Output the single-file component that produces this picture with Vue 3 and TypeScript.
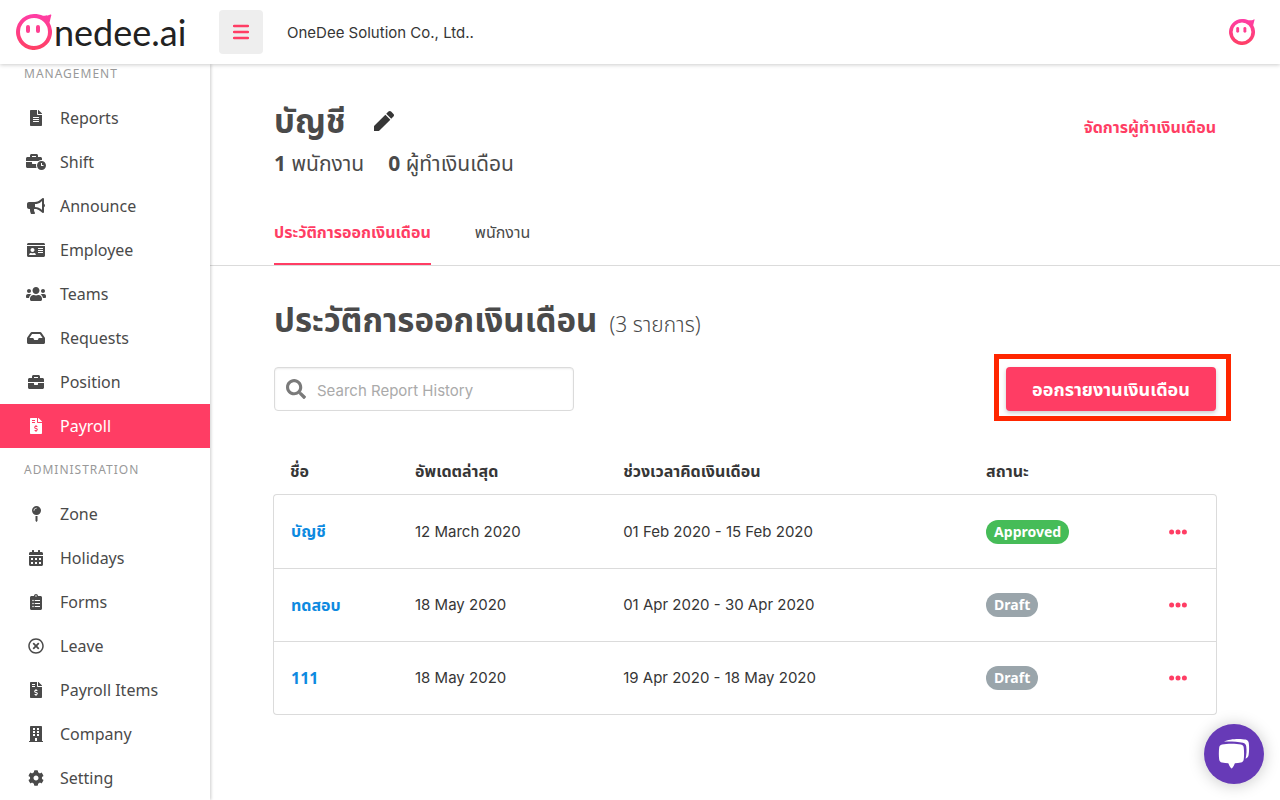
<script setup lang="ts">
import { ref } from 'vue'

interface NavItem { label: string; w: number; vw: number; d: string }
interface NavGroup { title: string; items: NavItem[] }
interface Report { name: string; updated: string; period: string; status: 'Approved' | 'Draft' }

const invoice =
  'M377 105L279.1 7c-4.5-4.5-10.6-7-17-7H256v128h128v-6.1c0-6.3-2.5-12.4-7-16.9zm-153 31V0H24C10.7 0 0 10.7 0 24v464c0 13.3 10.7 24 24 24h336c13.3 0 24-10.7 24-24V160H248c-13.2 0-24-10.8-24-24zM64 72c0-4.42 3.58-8 8-8h80c4.42 0 8 3.58 8 8v16c0 4.42-3.58 8-8 8H72c-4.42 0-8-3.58-8-8V72zm0 80v-16c0-4.42 3.58-8 8-8h80c4.42 0 8 3.58 8 8v16c0 4.42-3.58 8-8 8H72c-4.42 0-8-3.58-8-8zm144 263.88V440c0 4.42-3.58 8-8 8h-16c-4.42 0-8-3.58-8-8v-24.29c-11.29-.58-22.27-4.52-31.37-11.35-3.9-2.93-4.1-8.77-.57-12.14l11.75-11.21c2.77-2.64 6.89-2.76 10.13-.73 3.87 2.42 8.26 3.72 12.82 3.72h28.11c6.5 0 11.8-5.92 11.8-13.19 0-5.95-3.61-11.19-8.77-12.73l-45-13.5c-18.59-5.58-31.58-23.42-31.58-43.39 0-24.52 19.05-44.44 42.67-45.07V232c0-4.42 3.58-8 8-8h16c4.42 0 8 3.58 8 8v24.29c11.29.58 22.27 4.51 31.37 11.35 3.9 2.93 4.1 8.77.57 12.14l-11.75 11.21c-2.77 2.64-6.89 2.76-10.13.73-3.87-2.43-8.26-3.72-12.82-3.72h-28.11c-6.5 0-11.8 5.92-11.8 13.19 0 5.95 3.61 11.19 8.77 12.73l45 13.5c18.59 5.58 31.58 23.42 31.58 43.39 0 24.53-19.05 44.44-42.67 45.07z'

const groups: NavGroup[] = [
  {
    title: 'MANAGEMENT',
    items: [
      { label: 'Reports', w: 12, vw: 384, d: 'M224 136V0H24C10.7 0 0 10.7 0 24v464c0 13.3 10.7 24 24 24h336c13.3 0 24-10.7 24-24V160H248c-13.2 0-24-10.8-24-24zm64 236c0 6.6-5.4 12-12 12H108c-6.6 0-12-5.4-12-12v-8c0-6.6 5.4-12 12-12h168c6.6 0 12 5.4 12 12v8zm0-64c0 6.6-5.4 12-12 12H108c-6.6 0-12-5.4-12-12v-8c0-6.6 5.4-12 12-12h168c6.6 0 12 5.4 12 12v8zm0-72v8c0 6.6-5.4 12-12 12H108c-6.6 0-12-5.4-12-12v-8c0-6.6 5.4-12 12-12h168c6.6 0 12 5.4 12 12zm96-114.1v6.1H256V0h6.1c6.4 0 12.5 2.5 17 7l97.9 98c4.5 4.5 7 10.6 7 16.9z' },
      { label: 'Shift', w: 20, vw: 640, d: 'M496 224c-79.59 0-144 64.41-144 144s64.41 144 144 144 144-64.41 144-144-64.41-144-144-144zm64 150.29c0 5.34-4.37 9.71-9.71 9.71h-60.57c-5.34 0-9.71-4.37-9.71-9.71v-76.57c0-5.34 4.37-9.71 9.71-9.71h12.57c5.34 0 9.71 4.37 9.71 9.71V352h38.29c5.34 0 9.71 4.37 9.71 9.71v12.58zM496 192c5.4 0 10.72.33 16 .81V144c0-25.6-22.4-48-48-48h-80V48c0-25.6-22.4-48-48-48H176c-25.6 0-48 22.4-48 48v48H48c-25.6 0-48 22.4-48 48v80h395.12c28.6-20.09 63.35-32 100.88-32zM320 96H192V64h128v32zm6.82 224H208c-8.84 0-16-7.16-16-16v-48H0v144c0 25.6 22.4 48 48 48h291.43C327.1 423.96 320 396.82 320 368c0-16.66 2.48-32.72 6.82-48z' },
      { label: 'Announce', w: 18, vw: 576, d: 'M576 240c0-23.63-12.95-44.04-32-55.12V32.01C544 23.26 537.02 0 512 0c-7.12 0-14.19 2.38-19.98 7.02l-85.03 68.03C364.28 109.19 310.66 128 256 128H64c-35.35 0-64 28.65-64 64v96c0 35.35 28.65 64 64 64h33.7c-1.39 10.48-2.18 21.14-2.18 32 0 39.77 9.26 77.35 25.56 110.94 5.19 10.69 16.52 17.06 28.4 17.06h74.28c26.05 0 41.69-29.84 25.9-50.56-16.4-21.52-26.15-48.36-26.15-77.44 0-11.11 1.62-21.79 4.41-32H256c54.66 0 108.28 18.81 150.98 52.95l85.03 68.03a32.023 32.023 0 0 0 19.98 7.02c24.92 0 32-22.78 32-32V295.13C563.05 284.04 576 263.63 576 240zm-96 141.42l-33.05-26.44C392.95 311.78 325.12 288 256 288v-96c69.12 0 136.95-23.78 190.95-66.98L480 98.58v282.84z' },
      { label: 'Employee', w: 18, vw: 576, d: 'M528 32H48C21.5 32 0 53.5 0 80v16h576V80c0-26.5-21.5-48-48-48zM0 432c0 26.5 21.5 48 48 48h480c26.5 0 48-21.5 48-48V128H0v304zm352-232c0-4.4 3.6-8 8-8h144c4.4 0 8 3.6 8 8v16c0 4.4-3.6 8-8 8H360c-4.4 0-8-3.6-8-8v-16zm0 64c0-4.4 3.6-8 8-8h144c4.4 0 8 3.6 8 8v16c0 4.4-3.6 8-8 8H360c-4.4 0-8-3.6-8-8v-16zm0 64c0-4.4 3.6-8 8-8h144c4.4 0 8 3.6 8 8v16c0 4.4-3.6 8-8 8H360c-4.4 0-8-3.6-8-8v-16zM176 192c35.3 0 64 28.7 64 64s-28.7 64-64 64-64-28.7-64-64 28.7-64 64-64zM67.1 396.2C75.5 370.5 99.6 352 128 352h8.2c12.3 5.1 25.7 8 39.8 8s27.6-2.9 39.8-8h8.2c28.4 0 52.5 18.5 60.9 44.2 3.2 9.9-5.2 19.8-15.6 19.8H82.7c-10.4 0-18.8-10-15.6-19.8z' },
      { label: 'Teams', w: 20, vw: 640, d: 'M96 224c35.3 0 64-28.7 64-64s-28.7-64-64-64-64 28.7-64 64 28.7 64 64 64zm448 0c35.3 0 64-28.7 64-64s-28.7-64-64-64-64 28.7-64 64 28.7 64 64 64zm32 32h-64c-17.6 0-33.5 7.1-45.1 18.6 40.3 22.1 68.9 62 75.1 109.4h66c17.7 0 32-14.3 32-32v-32c0-35.3-28.7-64-64-64zm-256 0c61.9 0 112-50.1 112-112S381.9 32 320 32 208 82.1 208 144s50.1 112 112 112zm76.8 32h-8.3c-20.8 10-43.9 16-68.5 16s-47.6-6-68.5-16h-8.3C179.6 288 128 339.6 128 403.2V432c0 26.5 21.5 48 48 48h288c26.5 0 48-21.5 48-48v-28.8c0-63.6-51.6-115.2-115.2-115.2zm-223.7-13.4C161.5 263.1 145.6 256 128 256H64c-35.3 0-64 28.7-64 64v32c0 17.7 14.3 32 32 32h65.9c6.3-47.4 34.9-87.3 75.2-109.4z' },
      { label: 'Requests', w: 18, vw: 576, d: 'M567.938 243.908L462.25 85.374A48.003 48.003 0 0 0 422.311 64H153.689a48 48 0 0 0-39.938 21.374L8.062 243.908A47.994 47.994 0 0 0 0 270.533V400c0 26.51 21.49 48 48 48h480c26.51 0 48-21.49 48-48V270.533a47.994 47.994 0 0 0-8.062-26.625zM162.252 128h251.497l85.333 128H376l-32 64H232l-32-64H76.918l85.334-128z' },
      { label: 'Position', w: 16, vw: 512, d: 'M320 336c0 8.84-7.16 16-16 16h-96c-8.84 0-16-7.16-16-16v-48H0v144c0 25.6 22.4 48 48 48h416c25.6 0 48-22.4 48-48V288H320v48zm144-208h-80V80c0-25.6-22.4-48-48-48H176c-25.6 0-48 22.4-48 48v48H48c-25.6 0-48 22.4-48 48v80h512v-80c0-25.6-22.4-48-48-48zm-144 0H192V96h128v32z' },
      { label: 'Payroll', w: 12, vw: 384, d: invoice },
    ],
  },
  {
    title: 'ADMINISTRATION',
    items: [
      { label: 'Zone', w: 9, vw: 288, d: 'M112 316.94v156.69l22.02 33.02c4.75 7.12 15.22 7.12 19.97 0L176 473.63V316.94c-10.39 1.92-21.06 3.06-32 3.06s-21.61-1.14-32-3.06zM144 0C64.47 0 0 64.47 0 144s64.47 144 144 144 144-64.47 144-144S223.53 0 144 0zm0 76c-37.5 0-68 30.5-68 68 0 6.62-5.38 12-12 12s-12-5.38-12-12c0-50.73 41.28-92 92-92 6.62 0 12 5.38 12 12s-5.38 12-12 12z' },
      { label: 'Holidays', w: 14, vw: 448, d: 'M0 464c0 26.5 21.5 48 48 48h352c26.5 0 48-21.5 48-48V192H0v272zM320 256h64v64h-64zM320 384h64v64h-64zM192 256h64v64h-64zM192 384h64v64h-64zM64 256h64v64H64zM64 384h64v64H64zM400 64h-48V16c0-8.8-7.2-16-16-16h-32c-8.8 0-16 7.2-16 16v48H160V16c0-8.8-7.2-16-16-16h-32c-8.8 0-16 7.2-16 16v48H48C21.5 64 0 85.5 0 112v48h448v-48c0-26.5-21.5-48-48-48z' },
      { label: 'Forms', w: 12, vw: 384, d: 'M336 64h-80c0-35.3-28.7-64-64-64s-64 28.7-64 64H48C21.5 64 0 85.5 0 112v352c0 26.5 21.5 48 48 48h288c26.5 0 48-21.5 48-48V112c0-26.5-21.5-48-48-48zM192 40c13.3 0 24 10.7 24 24s-10.7 24-24 24-24-10.7-24-24 10.7-24 24-24zM96 184a24 24 0 1 0 .1 48 24 24 0 0 0-.1-48zM96 280a24 24 0 1 0 .1 48 24 24 0 0 0-.1-48zM96 376a24 24 0 1 0 .1 48 24 24 0 0 0-.1-48zM152 192h168v32H152zM152 288h168v32H152zM152 384h168v32H152z' },
      { label: 'Leave', w: 16, vw: 512, d: 'M256 8C119 8 8 119 8 256s111 248 248 248 248-111 248-248S393 8 256 8zm0 448c-110.5 0-200-89.5-200-200S145.5 56 256 56s200 89.5 200 200-89.5 200-200 200zm101.8-262.2L295.6 256l62.2 62.2c4.7 4.7 4.7 12.3 0 17l-22.6 22.6c-4.7 4.7-12.3 4.7-17 0L256 295.6l-62.2 62.2c-4.7 4.7-12.3 4.7-17 0l-22.6-22.6c-4.7-4.7-4.7-12.3 0-17l62.2-62.2-62.2-62.2c-4.7-4.7-4.7-12.3 0-17l22.6-22.6c4.7-4.7 12.3-4.7 17 0l62.2 62.2 62.2-62.2c4.7-4.7 12.3-4.7 17 0l22.6 22.6c4.7 4.7 4.7 12.3 0 17z' },
      { label: 'Payroll Items', w: 12, vw: 384, d: invoice },
      { label: 'Company', w: 14, vw: 448, d: 'M436 480h-20V24c0-13.255-10.745-24-24-24H56C42.745 0 32 10.745 32 24v456H12c-6.627 0-12 5.373-12 12v20h448v-20c0-6.627-5.373-12-12-12zM128 64h64v64h-64zM256 64h64v64h-64zM128 160h64v64h-64zM256 160h64v64h-64zM128 256h64v64h-64zM256 256h64v64h-64zM192 384h64v96h-64z' },
      { label: 'Setting', w: 16, vw: 512, d: 'M487.4 315.7l-42.6-24.6c4.3-23.2 4.3-47 0-70.2l42.6-24.6c4.9-2.8 7.1-8.6 5.5-14-11.1-35.6-30-67.8-54.7-94.6-3.8-4.1-10-5.1-14.8-2.3L380.8 110c-17.9-15.4-38.5-27.3-60.8-35.1V25.8c0-5.6-3.9-10.5-9.4-11.7-36.7-8.2-74.3-7.8-109.2 0-5.5 1.2-9.4 6.1-9.4 11.7V75c-22.2 7.9-42.8 19.8-60.8 35.1L88.7 85.5c-4.9-2.8-11-1.9-14.8 2.3-24.7 26.7-43.6 58.9-54.7 94.6-1.7 5.4.6 11.2 5.5 14L67.3 221c-4.3 23.2-4.3 47 0 70.2l-42.6 24.6c-4.9 2.8-7.1 8.6-5.5 14 11.1 35.6 30 67.8 54.7 94.6 3.8 4.1 10 5.1 14.8 2.3l42.6-24.6c17.9 15.4 38.5 27.3 60.8 35.1v49.2c0 5.6 3.9 10.5 9.4 11.7 36.7 8.2 74.3 7.8 109.2 0 5.5-1.2 9.4-6.1 9.4-11.7v-49.2c22.2-7.9 42.8-19.8 60.8-35.1l42.6 24.6c4.9 2.8 11 1.9 14.8-2.3 24.7-26.7 43.6-58.9 54.7-94.6 1.5-5.5-.7-11.3-5.6-14.1zM256 336c-44.1 0-80-35.9-80-80s35.9-80 80-80 80 35.9 80 80-35.9 80-80 80z' },
    ],
  },
]

const reports: Report[] = [
  { name: 'บัญชี', updated: '12 March 2020', period: '01 Feb 2020 - 15 Feb 2020', status: 'Approved' },
  { name: 'ทดสอบ', updated: '18 May 2020', period: '01 Apr 2020 - 30 Apr 2020', status: 'Draft' },
  { name: '111', updated: '18 May 2020', period: '19 Apr 2020 - 18 May 2020', status: 'Draft' },
]

const active = ref('Payroll')
const query = ref('')
</script>

<template>
  <div class="app">
    <header class="topbar">
      <a class="brand" href="#" aria-label="Onedee.ai">
        <svg class="mark" viewBox="0 0 36 36" aria-hidden="true">
          <defs>
            <linearGradient id="pink" x1="0" y1="0" x2="0" y2="1">
              <stop offset="0" stop-color="#ff3da6" />
              <stop offset="1" stop-color="#ff4064" />
            </linearGradient>
          </defs>
          <path fill="url(#pink)" fill-rule="evenodd" d="M18 0c3.5 0 6.5.7 9 1.700 2.500.2 5.500-.1 7.300-1.100.7-.4 1.200 0 1 .7-.5 2.400-1.200 4.700-1.800 7.500A18 18 0 1 1 18 0zM18 4a14 14 0 1 0 0 28 14 14 0 0 0 0-28z" />
          <rect x="10" y="11" width="4" height="8" rx="2" fill="#ff3f92" />
          <rect x="20" y="11" width="4" height="8" rx="2" fill="#ff3f92" />
        </svg>
        <span class="wordmark">nedee.ai</span>
      </a>
      <button class="burger" type="button" aria-label="Toggle menu">
        <svg width="16" height="16" viewBox="0 0 16 16" aria-hidden="true">
          <path d="M1 2h14M1 8h14M1 14h14" stroke="#ff3d64" stroke-width="2.400" stroke-linecap="round" />
        </svg>
      </button>
      <span class="company">OneDee Solution Co., Ltd..</span>
      <button class="avatar" type="button" aria-label="Account">
        <svg width="26" height="26" viewBox="0 0 36 36" aria-hidden="true">
          <path fill="url(#pink)" fill-rule="evenodd" d="M18 0c3.5 0 6.5.7 9 1.700 2.500.2 5.500-.1 7.300-1.100.7-.4 1.200 0 1 .7-.5 2.400-1.200 4.700-1.800 7.500A18 18 0 1 1 18 0zM18 5a13 13 0 1 0 0 26 13 13 0 0 0 0-26z" />
          <rect x="10" y="11" width="4" height="8" rx="2" fill="#ff3f92" />
          <rect x="20" y="11" width="4" height="8" rx="2" fill="#ff3f92" />
        </svg>
      </button>
    </header>

    <div class="body">
      <nav class="sidebar">
        <section v-for="g in groups" :key="g.title" class="group">
          <h2 class="group-title">{{ g.title }}</h2>
          <a
            v-for="item in g.items"
            :key="item.label"
            href="#"
            class="nav-item"
            :class="{ active: active === item.label }"
            @click.prevent="active = item.label"
          >
            <span class="nav-icon">
              <svg :width="item.w" height="16" :viewBox="`0 0 ${item.vw} 512`" aria-hidden="true">
                <path :d="item.d" fill="currentColor" fill-rule="evenodd" />
              </svg>
            </span>
            {{ item.label }}
          </a>
        </section>
      </nav>

      <main class="main">
        <div class="page-head">
          <div>
            <div class="title-row">
              <h1>บัญชี</h1>
              <button class="edit" type="button" aria-label="Edit name">
                <svg width="20" height="20" viewBox="0 0 512 512" aria-hidden="true">
                  <path fill="currentColor" d="M290.74 93.24l128.02 128.02L140 500l-20 12H0V392l12.84-20.88zm207.2-19.06l-60.11-60.11c-18.75-18.75-49.16-18.75-67.91 0l-56.55 56.55 128.02 128.02 56.55-56.55c18.75-18.76 18.75-49.16 0-67.91z" />
                </svg>
              </button>
            </div>
            <p class="counts">
              <span><b>1</b> พนักงาน</span>
              <span><b>0</b> ผู้ทำเงินเดือน</span>
            </p>
          </div>
          <a class="manage" href="#">จัดการผู้ทำเงินเดือน</a>
        </div>

        <div class="tabs" role="tablist">
          <button class="tab selected" type="button" role="tab" aria-selected="true">ประวัติการออกเงินเดือน</button>
          <button class="tab" type="button" role="tab" aria-selected="false">พนักงาน</button>
        </div>

        <section class="content">
          <div class="section-title">
            <h2>ประวัติการออกเงินเดือน</h2>
            <span>(3 รายการ)</span>
          </div>

          <div class="toolbar">
            <label class="search">
              <svg width="20" height="20" viewBox="0 0 512 512" aria-hidden="true">
                <path fill="#7a7a7a" d="M505 442.7L405.3 343c-4.5-4.5-10.6-7-17-7H372c27.6-35.3 44-79.7 44-128C416 93.1 322.9 0 208 0S0 93.1 0 208s93.1 208 208 208c48.3 0 92.7-16.4 128-44v16.3c0 6.4 2.5 12.5 7 17l99.7 99.7c9.4 9.4 24.6 9.4 33.9 0l28.3-28.3c9.4-9.4 9.4-24.6.1-34zM208 336c-70.7 0-128-57.2-128-128 0-70.7 57.2-128 128-128 70.7 0 128 57.2 128 128 0 70.7-57.2 128-128 128z" />
              </svg>
              <input v-model="query" type="text" placeholder="Search Report History" aria-label="Search Report History" />
            </label>
            <div class="callout">
              <button class="primary" type="button">ออกรายงานเงินเดือน</button>
            </div>
          </div>

          <table class="reports">
            <colgroup>
              <col class="c-name" />
              <col class="c-updated" />
              <col class="c-period" />
              <col class="c-status" />
              <col />
            </colgroup>
            <thead>
              <tr>
                <th scope="col">ชื่อ</th>
                <th scope="col">อัพเดตล่าสุด</th>
                <th scope="col">ช่วงเวลาคิดเงินเดือน</th>
                <th scope="col">สถานะ</th>
                <td></td>
              </tr>
            </thead>
            <tbody>
              <tr v-for="r in reports" :key="r.name">
                <td><a class="name" href="#">{{ r.name }}</a></td>
                <td>{{ r.updated }}</td>
                <td>{{ r.period }}</td>
                <td><span class="badge" :class="r.status.toLowerCase()">{{ r.status }}</span></td>
                <td class="actions">
                  <button class="more" type="button" :aria-label="`Actions for ${r.name}`">
                    <svg width="18" height="6" viewBox="0 0 18 6" aria-hidden="true">
                      <g fill="#ff3d64">
                        <circle cx="2.6" cy="3" r="2.5" />
                        <circle cx="9" cy="3" r="2.5" />
                        <circle cx="15.4" cy="3" r="2.5" />
                      </g>
                    </svg>
                  </button>
                </td>
              </tr>
            </tbody>
          </table>
        </section>
      </main>
    </div>

    <button class="chat" type="button" aria-label="Open chat">
      <svg width="34" height="32" viewBox="0 0 34 32" aria-hidden="true">
        <path fill="#fff" d="M7 3.600C12 .6 24 .4 28.500 1.600c2 .5 3 1.500 3.300 3.500.5 4 .4 8.500-.2 12-.3 1.800-1.300 3-3 3.600 1-4 1.200-8.300.6-12.400-.3-2-1.300-3.200-3.300-3.600C20.500 3.700 12.500 3.200 7 3.600z" />
        <path fill="#fff" d="M5 6.500c5-1.100 14-1.100 19 0 1.600.4 2.500 1.300 2.700 3 .5 4 .5 8.500 0 12-.3 1.700-1.200 2.700-2.800 3-2 .4-4 .6-6 .7-.8 2-1.600 3.600-2.600 4.900-.4.5-1 .5-1.400 0-1-1.300-1.800-2.900-2.600-4.900-2-.1-4.300-.3-6.300-.7-1.600-.3-2.500-1.300-2.800-3-.5-3.500-.5-8 0-12C2.500 7.800 3.400 6.900 5 6.500z" />
      </svg>
    </button>
  </div>
</template>

<style>
body {
  margin: 0;
  background: #fff;
}
</style>

<style scoped>
.app {
  min-height: 100vh;
  display: flex;
  flex-direction: column;
  box-sizing: border-box;
  font-family: "Noto Sans", "Noto Sans Thai", sans-serif;
  font-size: 16px;
  line-height: 24px;
  color: #363636;
}
button {
  font-family: inherit;
  font-size: 16px;
  line-height: 24px;
  padding: 0;
  border: 0;
  background: none;
  cursor: pointer;
}
a {
  text-decoration: none;
}
svg {
  display: block;
}
h1,
h2,
p {
  margin: 0;
}

.topbar {
  position: relative;
  z-index: 2;
  height: 64px;
  display: flex;
  align-items: center;
  background: #fff;
  box-shadow: 0 1px 4px rgba(0, 0, 0, 0.2);
}
.brand {
  width: 203px;
  padding-left: 16px;
  display: flex;
  align-items: center;
  color: #222;
}
.mark {
  width: 36px;
  height: 36px;
}
.wordmark {
  margin-left: 2px;
  font-family: Lato, sans-serif;
  font-size: 36px;
  line-height: 40px;
}
.burger {
  width: 44px;
  height: 44px;
  display: grid;
  place-items: center;
  background: #eee;
  border-radius: 4px;
}
.company {
  margin-left: 24px;
  padding-top: 2px;
  font-family: Inter, sans-serif;
  font-size: 15px;
}
.avatar {
  margin-left: auto;
  margin-right: 25px;
}

.body {
  flex: 1;
  display: flex;
}
.sidebar {
  position: relative;
  z-index: 1;
  flex: 0 0 210px;
  background: #fff;
  box-shadow: 1px 0 3px rgba(0, 0, 0, 0.2);
}
.group-title {
  padding: 12px 24px;
  font-size: 12px;
  line-height: 20px;
  font-weight: 400;
  letter-spacing: 1px;
  color: #999;
}
.group:first-child .group-title {
  padding-top: 0;
}
.nav-item {
  height: 44px;
  display: flex;
  align-items: center;
  padding-left: 24px;
  color: #4a4a4a;
}
.nav-item.active {
  background: #ff3d64;
  color: #fff;
}
.nav-icon {
  width: 24px;
  margin-right: 12px;
  display: flex;
  justify-content: center;
}

.main {
  flex: 1;
  min-width: 0;
}
.page-head {
  display: flex;
  justify-content: space-between;
  align-items: flex-start;
  padding: 37px 64px 0;
  color: #4a4a4a;
}
.title-row {
  display: flex;
  align-items: center;
  gap: 28px;
}
h1 {
  font-size: 33px;
  line-height: 40px;
  font-weight: 700;
}
.edit {
  color: #363636;
}
.counts {
  display: flex;
  gap: 24px;
  margin-top: 6px;
  font-size: 21px;
  line-height: 32px;
}
.manage {
  margin-top: 14px;
  font-weight: 700;
  color: #ff3d64;
}
.tabs {
  display: flex;
  gap: 44px;
  margin-top: 22px;
  padding: 0 64px;
  border-bottom: 1px solid #dbdbdb;
}
.tab {
  height: 64px;
  border-bottom: 2px solid transparent;
  color: #4a4a4a;
}
.tab.selected {
  font-weight: 700;
  color: #ff3d64;
  border-color: #ff3d64;
}

.content {
  padding: 34px 64px 64px;
}
.section-title {
  display: flex;
  align-items: baseline;
  gap: 12px;
  color: #4a4a4a;
}
.section-title h2 {
  font-size: 33px;
  line-height: 40px;
  font-weight: 700;
}
.section-title span {
  font-size: 21px;
  font-weight: 300;
}
.toolbar {
  display: flex;
  justify-content: space-between;
  align-items: center;
  margin-top: 27px;
}
.search {
  width: 300px;
  height: 44px;
  box-sizing: border-box;
  display: flex;
  align-items: center;
  gap: 11px;
  padding: 0 11px;
  border: 1px solid #dbdbdb;
  border-radius: 4px;
  box-shadow: inset 0 1px 2px rgba(10, 10, 10, 0.08);
}
.search input {
  flex: 1;
  min-width: 0;
  padding: 3px 0 0;
  border: 0;
  outline: 0;
  background: none;
  font-family: Inter, sans-serif;
  font-size: 15px;
  line-height: 24px;
  color: #363636;
}
.search input::placeholder {
  color: #aaa;
}
.callout {
  position: relative;
}
.callout::after {
  content: "";
  position: absolute;
  inset: -13px -15px -10px -12px;
  border: 5px solid #ff2600;
  pointer-events: none;
}
.primary {
  width: 210px;
  height: 44px;
  border-radius: 4px;
  background: #ff3d64;
  color: #fff;
  font-size: 18px;
  font-weight: 700;
  box-shadow: 0 2px 4px rgba(0, 0, 0, 0.2);
}

.reports {
  width: calc(100% + 2px);
  margin: 36px -1px 0;
  table-layout: fixed;
  border-collapse: separate;
  border-spacing: 0;
  font-family: Inter, "Noto Sans Thai", sans-serif;
  font-size: 15px;
}
.c-name {
  width: 13.35%;
}
.c-updated {
  width: 22.05%;
}
.c-period {
  width: 38.45%;
}
.c-status {
  width: 19.4%;
}
.reports th {
  height: 47px;
  padding: 0 16px;
  text-align: left;
  font-size: 16px;
  font-weight: 700;
}
.reports tbody td {
  height: 72px;
  padding: 0 16px;
  border-bottom: 1px solid #dbdbdb;
}
.reports th:first-child,
.reports tbody td:first-child {
  padding-left: 17px;
}
.reports tbody tr:first-child td {
  height: 73px;
  border-top: 1px solid #dbdbdb;
}
.reports tbody td:first-child {
  border-left: 1px solid #dbdbdb;
}
.reports tbody td:last-child {
  border-right: 1px solid #dbdbdb;
}
.reports tbody tr:first-child td:first-child {
  border-top-left-radius: 4px;
}
.reports tbody tr:first-child td:last-child {
  border-top-right-radius: 4px;
}
.reports tbody tr:last-child td:first-child {
  border-bottom-left-radius: 4px;
}
.reports tbody tr:last-child td:last-child {
  border-bottom-right-radius: 4px;
}
.name {
  font-family: "Noto Sans", "Noto Sans Thai", sans-serif;
  font-size: 16px;
  font-weight: 700;
  color: #0d8ae0;
}
.badge {
  display: inline-block;
  padding: 0 8px;
  border-radius: 12px;
  font-family: "Noto Sans", sans-serif;
  font-size: 14px;
  font-weight: 700;
  color: #fff;
}
.badge.approved {
  background: #46bc58;
}
.badge.draft {
  background: #9aa5ab;
}
.more {
  height: 24px;
  display: flex;
  align-items: center;
}

.chat {
  position: fixed;
  right: 16px;
  bottom: 16px;
  z-index: 3;
  width: 60px;
  height: 60px;
  display: grid;
  place-items: center;
  border-radius: 50%;
  background: #673ab7;
  box-shadow: 0 1px 16px rgba(0, 0, 0, 0.22);
}
</style>
